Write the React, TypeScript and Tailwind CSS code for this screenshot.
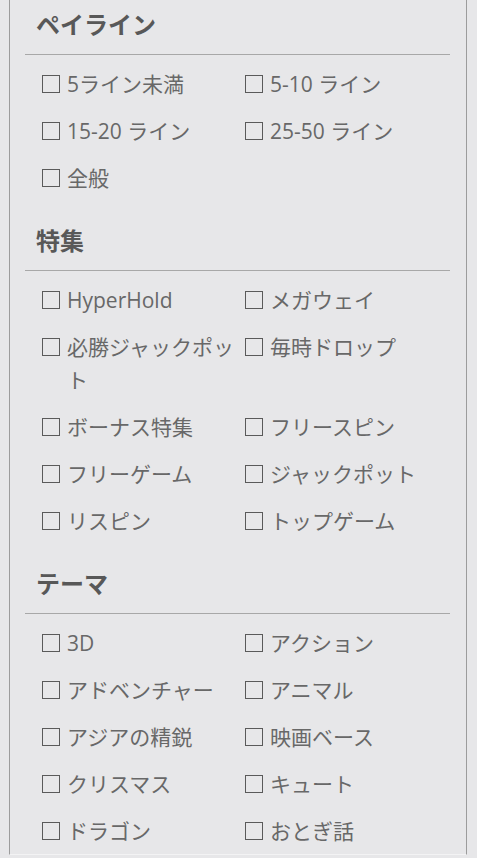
import React from 'react';

interface FilterSection {
  title: string;
  items: string[];
}

const sections: FilterSection[] = [
  {
    title: 'ペイライン',
    items: ['5ライン未満', '5-10 ライン', '15-20 ライン', '25-50 ライン', '全般'],
  },
  {
    title: '特集',
    items: [
      'HyperHold',
      'メガウェイ',
      '必勝ジャックポット',
      '毎時ドロップ',
      'ボーナス特集',
      'フリースピン',
      'フリーゲーム',
      'ジャックポット',
      'リスピン',
      'トップゲーム',
    ],
  },
  {
    title: 'テーマ',
    items: [
      '3D',
      'アクション',
      'アドベンチャー',
      'アニマル',
      'アジアの精鋭',
      '映画ベース',
      'クリスマス',
      'キュート',
      'ドラゴン',
      'おとぎ話',
    ],
  },
];

function CheckItem({ label }: { label: string }) {
  return (
    <label className="flex items-start gap-[7px] leading-[33px] text-[21px] text-[#686868] cursor-pointer">
      <span className="mt-[7px] w-[18px] h-[18px] shrink-0 border-[1.5px] border-[#5a5a5a] bg-transparent" />
      <span className="min-w-0">{label}</span>
    </label>
  );
}

function Section({ section, first }: { section: FilterSection; first: boolean }) {
  return (
    <div className={first ? '' : 'mt-[28px]'}>
      <h3 className="pl-[11px] pb-[11px] border-b border-[#a8a8a8] text-[24px] leading-[36px] font-bold text-[#585858]">
        {section.title}
      </h3>
      <div className="grid grid-cols-[203px_1fr] gap-y-[14px] pl-[17px] pt-[13px]">
        {section.items.map((item) => (
          <CheckItem key={item} label={item} />
        ))}
      </div>
    </div>
  );
}

export default function App() {
  return (
    <div
      className="min-h-[858px] w-[477px] bg-[#e7e7e9]"
      style={{ fontFamily: '"Open Sans", "Noto Sans CJK JP", sans-serif' }}
    >
      <div className="ml-[9px] mr-[10px] h-[855px] overflow-hidden border-x border-b border-x-[#9c9c9c] border-b-[#f3f3f4] pl-[15px] pr-[16px] pt-[7px]">
        {sections.map((s, i) => (
          <Section key={s.title} section={s} first={i === 0} />
        ))}
      </div>
    </div>
  );
}
